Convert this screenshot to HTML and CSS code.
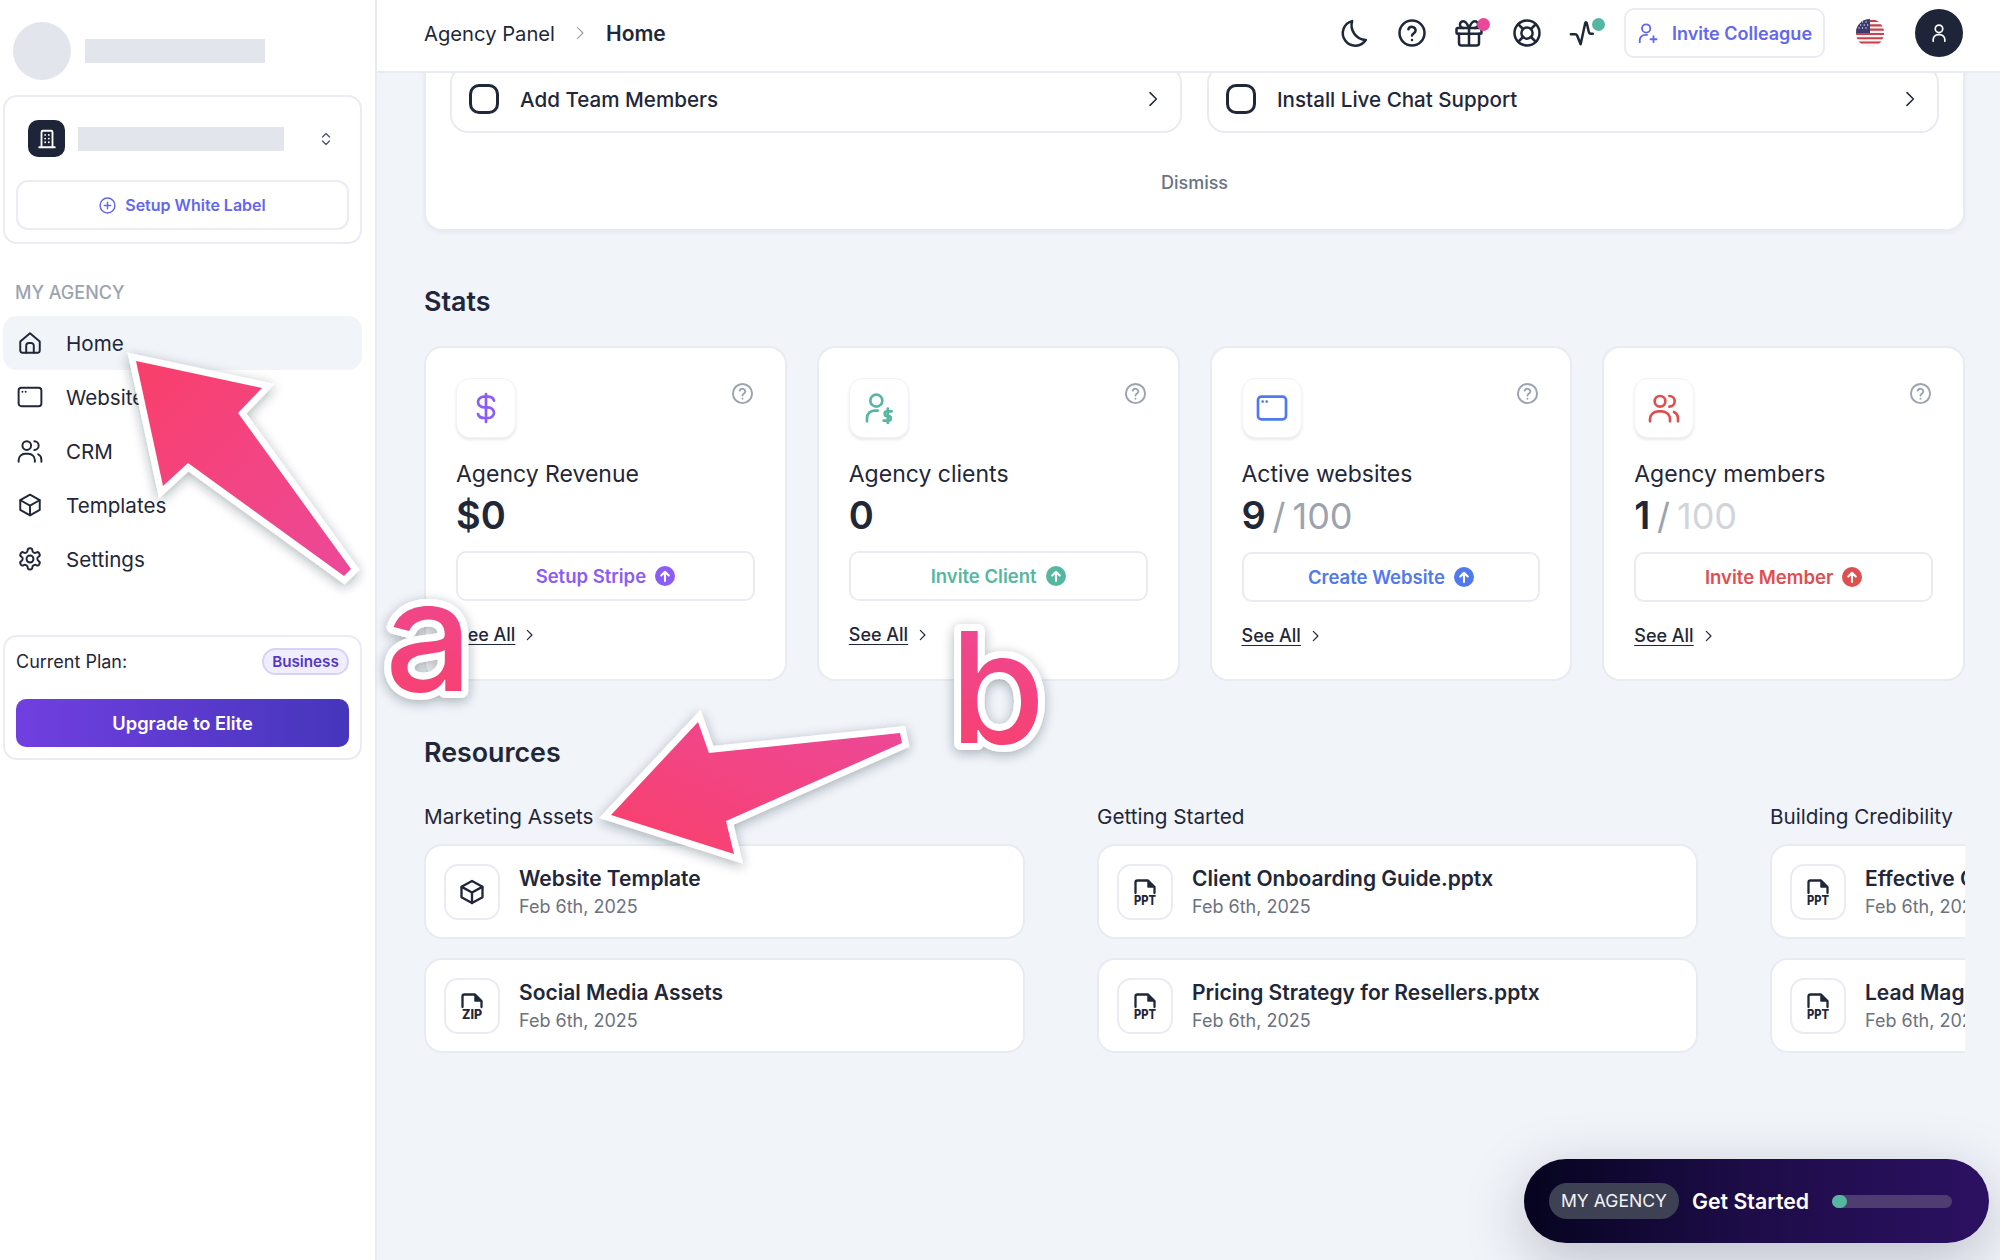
FILE: index.html
```html
<!DOCTYPE html>
<html lang="en">
<head>
<meta charset="utf-8">
<title>Agency Panel</title>
<link rel="stylesheet" href="styles.css">
</head>
<body>
<svg class="defs" width="0" height="0" aria-hidden="true">
  <defs>
    <symbol id="i-home" viewBox="0 0 24 24"><path d="M3 10.6 12 3l9 7.6V19a2 2 0 0 1-2 2H5a2 2 0 0 1-2-2z"/><path d="M8.5 21v-6.5a2.500 2.500 0 0 1 2.500-2.500h2a2.500 2.500 0 0 1 2.500 2.500V21"/></symbol>
    <symbol id="i-window" viewBox="0 0 24 24"><rect x="1.500" y="3.500" width="21" height="17" rx="2.500"/><path d="M5 7.200h.01M8 7.200h.01"/></symbol>
    <symbol id="i-users" viewBox="0 0 24 24"><circle cx="9" cy="7" r="4"/><path d="M1.500 22v-1.500a6 6 0 0 1 6-6h3a6 6 0 0 1 6 6V22"/><path d="M16 3a4 4 0 0 1 0 8"/><path d="M19.500 15a5.500 5.500 0 0 1 3 5v2"/></symbol>
    <symbol id="i-box" viewBox="0 0 24 24"><path d="M21 7.500 12 2.500l-9 5v9l9 5 9-5z"/><path d="M3.200 7.600 12 12.500l8.800-4.900M12 12.500v9"/></symbol>
    <symbol id="i-gear" viewBox="0 0 24 24"><path d="M12.200 2h-.4a2 2 0 0 0-2 2v.2a2 2 0 0 1-1 1.700l-.4.2a2 2 0 0 1-2 0l-.2-.1a2 2 0 0 0-2.700.7l-.2.4a2 2 0 0 0 .7 2.700l.2.100a2 2 0 0 1 1 1.700v.5a2 2 0 0 1-1 1.700l-.2.100a2 2 0 0 0-.7 2.700l.2.400a2 2 0 0 0 2.700.7l.2-.1a2 2 0 0 1 2 0l.4.2a2 2 0 0 1 1 1.700v.2a2 2 0 0 0 2 2h.4a2 2 0 0 0 2-2v-.2a2 2 0 0 1 1-1.700l.4-.2a2 2 0 0 1 2 0l.2.100a2 2 0 0 0 2.700-.7l.2-.4a2 2 0 0 0-.7-2.700l-.2-.1a2 2 0 0 1-1-1.700v-.5a2 2 0 0 1 1-1.700l.2-.1a2 2 0 0 0 .7-2.700l-.2-.4a2 2 0 0 0-2.700-.7l-.2.100a2 2 0 0 1-2 0l-.4-.2a2 2 0 0 1-1-1.700V4a2 2 0 0 0-2-2z"/><circle cx="12" cy="12" r="3.200"/></symbol>
    <symbol id="i-moon" viewBox="0 0 24 24"><path d="M10.500 2.500c-2 7 3 15 11 15A10 10 0 1 1 10.500 2.500z"/></symbol>
    <symbol id="i-help" viewBox="0 0 24 24"><circle cx="12" cy="12" r="10"/><path d="M9.100 9a3 3 0 0 1 5.800 1c0 2-2.900 2.500-2.900 4"/><path d="M12 17.500h.01"/></symbol>
    <symbol id="i-gift" viewBox="0 0 24 24"><rect x="2" y="8" width="20" height="4.500" rx="1"/><path d="M4 12.500V20a2 2 0 0 0 2 2h12a2 2 0 0 0 2-2v-7.500M12 8v14"/><path d="M12 8C10.500 4 9 2.500 7.500 2.500a2.700 2.700 0 0 0 0 5.500M12 8c1.500-4 3-5.500 4.500-5.500a2.700 2.700 0 0 1 0 5.500"/></symbol>
    <symbol id="i-buoy" viewBox="0 0 24 24"><circle cx="12" cy="12" r="10"/><circle cx="12" cy="12" r="4.500"/><path d="m5 5 3.800 3.800M19 5l-3.800 3.800M5 19l3.800-3.800M19 19l-3.800-3.800"/></symbol>
    <symbol id="i-pulse" viewBox="0 0 24 24"><path d="M1.500 13H5c.8 0 1.200.4 1.500 1l2.800 7L13 4c.2-.8.900-.8 1.200 0l1.600 7c.2.800.800 1.500 1.700 1.500h1.500"/></symbol>
    <symbol id="i-user" viewBox="0 0 24 24"><circle cx="12" cy="7" r="4.500"/><path d="M5 22v-2a6 6 0 0 1 6-6h2a6 6 0 0 1 6 6v2"/></symbol>
    <symbol id="i-invite" viewBox="0 0 24 24"><circle cx="10" cy="7" r="4.500"/><path d="M3 22v-2a6 6 0 0 1 6-6h2"/><path d="M18 15.500v6.500M14.800 18.800h6.500"/></symbol>
    <symbol id="i-dollar" viewBox="0 0 24 24"><path d="M12 1.500v21"/><path d="M18 6.500c-.5-1.700-2.200-3-4.500-3h-3C8 3.500 6 5.300 6 7.500s2 4 4.500 4h3c2.500 0 4.500 1.800 4.500 4s-2 4-4.500 4h-3c-2.300 0-4-1.300-4.500-3"/></symbol>
    <symbol id="i-client" viewBox="0 0 24 24"><circle cx="10" cy="6.500" r="4.500"/><path d="M3 22v-2.500a5.500 5.500 0 0 1 5.500-5.500h2.500"/><path d="M21.500 14.500h-3.500a1.700 1.700 0 0 0 0 3.500h1.500a1.800 1.800 0 0 1 0 3.500h-4M18.600 12.500v11"/></symbol>
    <symbol id="i-chev" viewBox="0 0 24 24"><path d="m8 3.500 8.500 8.500L8 20.500"/></symbol>
    <symbol id="i-updown" viewBox="0 0 24 24"><path d="m6 8.500 6-6 6 6M6 15.500l6 6 6-6"/></symbol>
    <symbol id="i-plus" viewBox="0 0 24 24"><circle cx="12" cy="12" r="10.500"/><path d="M12 7.500v9M7.500 12h9"/></symbol>
    <symbol id="i-file" viewBox="0 0 28 32"><path d="M4.500 17V6.500a2 2 0 0 1 2-2H17l6.500 6.500v6"/><path class="fold" d="M17 5v6h6z"/></symbol>
    <symbol id="i-building" viewBox="0 0 24 24"><path d="M6 21V4.500A1.500 1.500 0 0 1 7.500 3h9A1.500 1.500 0 0 1 18 4.500V21M3.500 21h17"/><path d="M10 7.500h.01M14 7.500h.01M10 11.500h.01M14 11.500h.01M10 15.500h.01M14 15.500h.01"/></symbol>
    <symbol id="i-up" viewBox="0 0 24 24"><circle class="up-disc" cx="12" cy="12" r="12"/><path class="up-arrow" d="M12 18V7M7.500 11.500 12 7l4.500 4.500"/></symbol>
    <clipPath id="flag-clip"><circle cx="14" cy="14" r="14"/></clipPath>
    <linearGradient id="pink-a" x1="0" y1="0" x2="1" y2="1"><stop offset="0" stop-color="#f9406a"/><stop offset="1" stop-color="#ec4899"/></linearGradient>
    <linearGradient id="pink-b" x1="0" y1="1" x2="1" y2="0"><stop offset="0" stop-color="#f9406a"/><stop offset="1" stop-color="#ec4899"/></linearGradient>
    <linearGradient id="pink-c" x1="0" y1="1" x2="0" y2="0"><stop offset="0" stop-color="#f9406a"/><stop offset="1" stop-color="#ec4899"/></linearGradient>
    <filter id="soft" x="-20%" y="-20%" width="140%" height="140%"><feDropShadow dx="0" dy="3" stdDeviation="6" flood-color="#1f2739" flood-opacity=".35"/></filter>
  </defs>
</svg>

<div class="app">
  <aside class="side">
    <div class="brand"><span class="brand-avatar"></span><span class="brand-name"></span></div>

    <section class="panel workspace">
      <div class="ws-row">
        <span class="ws-icon"><svg class="ico ico-22"><use href="#i-building"/></svg></span>
        <span class="ws-name"></span>
        <svg class="ico ws-sort"><use href="#i-updown"/></svg>
      </div>
      <button class="white-label"><svg class="ico ico-17"><use href="#i-plus"/></svg>Setup White Label</button>
    </section>

    <div class="side-label">MY AGENCY</div>
    <nav class="nav">
      <a class="nav-item active"><svg class="ico ico-26"><use href="#i-home"/></svg>Home</a>
      <a class="nav-item"><svg class="ico ico-26"><use href="#i-window"/></svg>Websites</a>
      <a class="nav-item"><svg class="ico ico-26"><use href="#i-users"/></svg>CRM</a>
      <a class="nav-item"><svg class="ico ico-26"><use href="#i-box"/></svg>Templates</a>
      <a class="nav-item"><svg class="ico ico-26"><use href="#i-gear"/></svg>Settings</a>
    </nav>

    <section class="panel plan">
      <div class="plan-row"><span>Current Plan:</span><span class="plan-badge">Business</span></div>
      <button class="upgrade">Upgrade to Elite</button>
    </section>
  </aside>

  <main class="main">
    <header class="top">
      <div class="crumbs">
        <span>Agency Panel</span>
        <svg class="ico crumb-chev"><use href="#i-chev"/></svg>
        <strong>Home</strong>
      </div>
      <div class="top-tools">
        <div class="tool-group">
          <span class="tool"><svg class="ico ico-30"><use href="#i-moon"/></svg></span>
          <span class="tool"><svg class="ico ico-30"><use href="#i-help"/></svg></span>
          <span class="tool"><svg class="ico ico-30"><use href="#i-gift"/></svg><i class="dot dot-pink"></i></span>
          <span class="tool"><svg class="ico ico-30"><use href="#i-buoy"/></svg></span>
          <span class="tool"><svg class="ico ico-30"><use href="#i-pulse"/></svg><i class="dot dot-teal"></i></span>
        </div>
        <button class="invite"><svg class="ico ico-22"><use href="#i-invite"/></svg>Invite Colleague</button>
        <svg class="flag" viewBox="0 0 28 28" aria-label="US flag">
          <g clip-path="url(#flag-clip)">
            <rect width="28" height="28" fill="#f3f4f6"/>
            <path class="flag-red" d="M0 1h28v2.100H0zM0 5.300h28v2.100H0zM0 9.600h28v2.100H0zM0 13.900h28v2.100H0zM0 18.200h28v2.100H0zM0 22.500h28v2.100H0z"/>
            <rect width="14" height="14" fill="#3c3b6e"/>
            <path class="flag-stars" d="M3 3h.01M6.500 3h.01M10 3h.01M4.700 6h.01M8.200 6h.01M11.700 6h.01M3 9h.01M6.500 9h.01M10 9h.01"/>
          </g>
        </svg>
        <span class="me"><svg class="ico ico-20"><use href="#i-user"/></svg></span>
      </div>
    </header>

    <div class="content">
      <section class="onboard">
        <div class="todo-grid">
          <a class="todo"><span class="check"></span><span class="todo-text">Add Team Members</span><svg class="ico todo-chev"><use href="#i-chev"/></svg></a>
          <a class="todo"><span class="check"></span><span class="todo-text">Install Live Chat Support</span><svg class="ico todo-chev"><use href="#i-chev"/></svg></a>
        </div>
        <div class="dismiss">Dismiss</div>
      </section>

      <h2 class="h-stats">Stats</h2>
      <div class="stats">
        <article class="stat c-purple">
          <div class="stat-top"><span class="stat-icon"><svg class="ico ico-32"><use href="#i-dollar"/></svg></span><svg class="ico stat-help"><use href="#i-help"/></svg></div>
          <div class="stat-title">Agency Revenue</div>
          <div class="stat-value">$0</div>
          <button class="stat-btn">Setup Stripe<svg class="ico ico-20 up"><use href="#i-up"/></svg></button>
          <a class="see">See All<svg class="ico see-chev"><use href="#i-chev"/></svg></a>
        </article>
        <article class="stat c-teal">
          <div class="stat-top"><span class="stat-icon"><svg class="ico ico-32"><use href="#i-client"/></svg></span><svg class="ico stat-help"><use href="#i-help"/></svg></div>
          <div class="stat-title">Agency clients</div>
          <div class="stat-value">0</div>
          <button class="stat-btn">Invite Client<svg class="ico ico-20 up"><use href="#i-up"/></svg></button>
          <a class="see">See All<svg class="ico see-chev"><use href="#i-chev"/></svg></a>
        </article>
        <article class="stat c-blue">
          <div class="stat-top"><span class="stat-icon"><svg class="ico ico-32"><use href="#i-window"/></svg></span><svg class="ico stat-help"><use href="#i-help"/></svg></div>
          <div class="stat-title">Active websites</div>
          <div class="stat-value">9 <span class="of">/ 100</span></div>
          <button class="stat-btn">Create Website<svg class="ico ico-20 up"><use href="#i-up"/></svg></button>
          <a class="see">See All<svg class="ico see-chev"><use href="#i-chev"/></svg></a>
        </article>
        <article class="stat c-red">
          <div class="stat-top"><span class="stat-icon"><svg class="ico ico-32"><use href="#i-users"/></svg></span><svg class="ico stat-help"><use href="#i-help"/></svg></div>
          <div class="stat-title">Agency members</div>
          <div class="stat-value">1 <span class="of">/ <span class="of-light">100</span></span></div>
          <button class="stat-btn">Invite Member<svg class="ico ico-20 up"><use href="#i-up"/></svg></button>
          <a class="see">See All<svg class="ico see-chev"><use href="#i-chev"/></svg></a>
        </article>
      </div>

      <h2 class="h-res">Resources</h2>
      <div class="res">
        <div class="res-col">
          <div class="res-label">Marketing Assets</div>
          <a class="item"><span class="item-icon"><svg class="ico ico-28"><use href="#i-box"/></svg></span><span class="item-text"><b>Website Template</b><small>Feb 6th, 2025</small></span></a>
          <a class="item"><span class="item-icon"><svg class="ftype" viewBox="0 0 28 32"><use href="#i-file" width="28" height="32"/><text x="14" y="29" textLength="20" lengthAdjust="spacingAndGlyphs">ZIP</text></svg></span><span class="item-text"><b>Social Media Assets</b><small>Feb 6th, 2025</small></span></a>
        </div>
        <div class="res-col">
          <div class="res-label">Getting Started</div>
          <a class="item"><span class="item-icon"><svg class="ftype" viewBox="0 0 28 32"><use href="#i-file" width="28" height="32"/><text x="14" y="29" textLength="22" lengthAdjust="spacingAndGlyphs">PPT</text></svg></span><span class="item-text"><b>Client Onboarding Guide.pptx</b><small>Feb 6th, 2025</small></span></a>
          <a class="item"><span class="item-icon"><svg class="ftype" viewBox="0 0 28 32"><use href="#i-file" width="28" height="32"/><text x="14" y="29" textLength="22" lengthAdjust="spacingAndGlyphs">PPT</text></svg></span><span class="item-text"><b>Pricing Strategy for Resellers.pptx</b><small>Feb 6th, 2025</small></span></a>
        </div>
        <div class="res-col">
          <div class="res-label">Building Credibility</div>
          <a class="item"><span class="item-icon"><svg class="ftype" viewBox="0 0 28 32"><use href="#i-file" width="28" height="32"/><text x="14" y="29" textLength="22" lengthAdjust="spacingAndGlyphs">PPT</text></svg></span><span class="item-text"><b>Effective Client Reports.pptx</b><small>Feb 6th, 2025</small></span></a>
          <a class="item"><span class="item-icon"><svg class="ftype" viewBox="0 0 28 32"><use href="#i-file" width="28" height="32"/><text x="14" y="29" textLength="22" lengthAdjust="spacingAndGlyphs">PPT</text></svg></span><span class="item-text"><b>Lead Magnet Templates.pptx</b><small>Feb 6th, 2025</small></span></a>
        </div>
      </div>
    </div>
  </main>
</div>

<aside class="fab">
  <span class="fab-chip">MY AGENCY</span>
  <strong class="fab-title">Get Started</strong>
  <span class="fab-track"><span class="fab-fill"></span></span>
</aside>

<svg class="notes" viewBox="0 0 2000 1260" aria-hidden="true">
  <polygon class="arrow arrow-a" points="136,361 262,388 238,413 351,569 344,576 188,463 163,486"/>
  <polygon class="arrow arrow-b" points="611,815 698,722 709,753 900,733 902,743 726,821 734,854"/>
  <text class="letter letter-a" x="385" y="691">a</text>
  <text class="letter letter-b" x="950" y="743">b</text>
</svg>
</body>
</html>
```
FILE: styles.css
```css
* { box-sizing: border-box; }
html, body { margin: 0; height: 1260px; overflow: hidden; }
body {
  font-family: Inter, "Liberation Sans", sans-serif;
  color: #1f2739;
  background: #f1f4f9;
  position: relative;
}
button { font: inherit; background: #fff; cursor: pointer; }
.defs { position: absolute; }

.ico {
  display: block;
  flex: none;
  fill: none;
  stroke: currentColor;
  stroke-width: 2;
  stroke-linecap: round;
  stroke-linejoin: round;
}
.ico-17 { width: 17px; height: 17px; }
.ico-20 { width: 20px; height: 20px; }
.ico-22 { width: 22px; height: 22px; }
.ico-26 { width: 26px; height: 26px; stroke-width: 1.800; }
.ico-28 { width: 28px; height: 28px; }
.ico-30 { width: 30px; height: 30px; }
.ico-32 { width: 32px; height: 32px; }

.app { display: flex; height: 1260px; }

/* sidebar */
.side {
  width: 377px;
  flex: none;
  background: #fff;
  border-right: 2px solid #e8ecf2;
}
.brand { display: flex; align-items: center; gap: 14px; padding: 22px 0 0 13px; }
.brand-avatar { width: 58px; height: 58px; border-radius: 50%; background: #e2e6ec; }
.brand-name { width: 180px; height: 24px; background: #e2e6ec; }

.panel {
  width: 359px;
  margin-left: 3px;
  border: 2px solid #e9ecf2;
  border-radius: 14px;
  background: #fff;
  padding: 11px;
}
.workspace { margin-top: 15px; padding-top: 23px; padding-bottom: 12px; }
.ws-row { display: flex; align-items: center; padding-left: 12px; height: 37px; }
.ws-icon {
  width: 37px; height: 37px;
  border-radius: 10px;
  background: #1e2538;
  color: #fff;
  display: flex; align-items: center; justify-content: center;
}
.ws-name { width: 206px; height: 24px; margin-left: 13px; background: #e2e6ec; }
.ws-sort { width: 14px; height: 16px; margin-left: 35px; color: #4b5563; stroke-width: 2.200; }
.white-label {
  width: 100%;
  height: 50px;
  margin-top: 23px;
  border: 2px solid #e9ecf2;
  border-radius: 12px;
  color: #6366f1;
  font-size: 16px;
  font-weight: 600;
  display: flex; align-items: center; justify-content: center; gap: 9px;
}
.side-label {
  margin: 38px 0 12px 15px;
  font-size: 18px;
  line-height: 22px;
  font-weight: 500;
  color: #9ca3af;
}
.nav-item {
  display: flex; align-items: center; gap: 23px;
  width: 359px; height: 54px;
  margin-left: 3px;
  padding-left: 14px;
  border-radius: 14px;
  font-size: 20.6px;
  color: #1f2739;
}
.nav-item.active { background: #f1f4f9; }
.plan { margin-top: 49px; }
.plan-row { display: flex; align-items: center; justify-content: space-between; height: 27px; font-size: 18px; }
.plan-badge {
  width: 87px;
  height: 27px;
  border: 2px solid #d8d2f6;
  border-radius: 14px;
  background: #f0edfd;
  color: #5438c8;
  font-size: 15.2px;
  font-weight: 600;
  line-height: 23px;
  text-align: center;
}
.upgrade {
  width: 100%;
  height: 48px;
  margin-top: 24px;
  border: 0;
  border-radius: 10px;
  background: linear-gradient(90deg, #713fe0, #4636bc);
  color: #fff;
  font-size: 18.3px;
  font-weight: 600;
}

/* main */
.main { flex: 1; min-width: 0; display: flex; flex-direction: column; height: 1260px; }
.top {
  height: 73px;
  flex: none;
  display: flex; align-items: center;
  padding: 0 37px 5px 47px;
  background: #fff;
  border-bottom: 2px solid #e8ecf2;
  position: relative;
  z-index: 2;
}
.crumbs { display: flex; align-items: center; font-size: 20.2px; }
.crumbs strong { font-size: 21px; font-weight: 600; }
.crumb-chev { width: 16px; height: 16px; margin: 0 18px 0 17px; color: #9ca3af; stroke-width: 1.800; }
.top-tools { margin-left: auto; display: flex; align-items: center; }
.tool-group { display: flex; gap: 27.5px; }
.tool { position: relative; display: block; width: 30px; height: 30px; }
.dot { position: absolute; width: 13px; height: 13px; border-radius: 50%; top: 0; }
.dot-pink { background: #ec4899; left: 23px; }
.dot-teal { background: #56b7a0; left: 23px; }
.invite {
  width: 201px; height: 50px;
  margin-left: 25px;
  border: 2px solid #e9ecf2;
  border-radius: 10px;
  color: #6366f1;
  font-size: 18px;
  font-weight: 600;
  display: flex; align-items: center; justify-content: center; gap: 13px;
}
.flag { width: 28px; height: 28px; display: block; margin-left: 31px; }
.flag-red { fill: #c8414b; }
.flag-stars { fill: none; stroke: #f3f4f6; stroke-width: 1.300; stroke-linecap: round; }
.me {
  width: 48px; height: 48px;
  margin-left: 31px;
  border-radius: 50%;
  background: #1e2538;
  color: #fff;
  display: flex; align-items: center; justify-content: center;
}

.content { flex: 1; min-height: 0; padding: 0 35px 0 47px; }

.onboard {
  margin-top: -35px;
  padding: 25px 24px 35px;
  background: #fff;
  border: 2px solid #e8ecf2;
  border-radius: 18px;
  box-shadow: 0 2px 4px rgba(30, 40, 60, .05);
}
.todo-grid { display: grid; grid-template-columns: 1fr 1fr; gap: 25px; }
.todo {
  height: 68px;
  display: flex; align-items: center;
  padding: 0 18px 0 17px;
  border: 2px solid #e8ecf2;
  border-radius: 18px;
}
.check {
  width: 30px; height: 30px;
  border: 3px solid #1f2739;
  border-radius: 10px;
}
.todo-text { margin-left: 21px; font-size: 20.6px; font-weight: 500; }
.todo-chev { width: 18px; height: 20px; margin-left: auto; }
.dismiss {
  margin-top: 39px;
  text-align: center;
  font-size: 18px;
  line-height: 22px;
  font-weight: 500;
  color: #6b7280;
}

h2 { margin: 0; font-size: 26.8px; line-height: 34px; font-weight: 600; }
.h-stats { margin-top: 53px; }
.stats { margin-top: 28px; display: grid; grid-template-columns: repeat(4, 1fr); gap: 30px; }
.stat {
  height: 335px;
  padding: 30px;
  background: #fff;
  border: 2px solid #e8ecf2;
  border-radius: 18px;
  display: flex; flex-direction: column;
}
.stat-top { display: flex; align-items: flex-start; justify-content: space-between; }
.stat-icon {
  width: 60px; height: 60px;
  border-radius: 14px;
  background: #fff;
  border: 1px solid #f1f3f7;
  box-shadow: 0 2px 3px rgba(30, 40, 60, .1);
  display: flex; align-items: center; justify-content: center;
}
.stat-help { width: 23px; height: 23px; margin: 4px 1px 0 0; color: #9ca3af; stroke-width: 2; }
.stat-title { margin-top: 21px; font-size: 23px; line-height: 30px; }
.stat-value { margin-top: 4px; font-size: 38px; line-height: 44px; font-weight: 600; white-space: nowrap; word-spacing: -3px; }
.of { color: #9ca3af; font-weight: 400; font-size: 36px; }
.of-light { color: #d1d5db; }
.stat-btn {
  flex: none;
  margin-top: 14px;
  height: 50px;
  border: 2px solid #e8ecf2;
  border-radius: 10px;
  font-size: 18.5px;
  font-weight: 600;
  color: inherit;
  display: flex; align-items: center; justify-content: center; gap: 9px;
}
.c-purple { --tone: #8b5cf6; }
.c-teal { --tone: #56b7a0; }
.c-blue { --tone: #5079ee; }
.c-red { --tone: #e04f4f; }
.stat-icon, .stat-btn { color: var(--tone); }
.up { stroke: none; }
.up-disc { fill: currentColor; stroke: none; }
.up-arrow { fill: none; stroke: #fff; stroke-width: 2.500; }
.see {
  margin-top: 22px;
  align-self: flex-start;
  display: flex; align-items: center; gap: 8px;
  font-size: 18px;
  line-height: 24px;
  font-weight: 500;
  color: #1f2739;
  text-decoration: underline;
  text-underline-offset: 3px;
}
.see-chev { width: 13px; height: 14px; stroke-width: 2.200; }

.h-res { margin-top: 54px; }
.res { display: flex; gap: 72px; overflow: hidden; margin-top: 35px; }
.res-col { flex: 0 0 601px; display: flex; flex-direction: column; gap: 19px; }
.res-label { font-size: 20.7px; line-height: 26px; margin-bottom: -5px; white-space: nowrap; }
.item {
  height: 95px;
  display: flex; align-items: center; gap: 19px;
  padding: 0 18px;
  background: #fff;
  border: 2px solid #e8ecf2;
  border-radius: 18px;
  white-space: nowrap;
  overflow: hidden;
}
.item-icon {
  width: 56px; height: 56px;
  flex: none;
  border: 2px solid #e9ecf2;
  border-radius: 14px;
  display: flex; align-items: center; justify-content: center;
}
.ftype { width: 28px; height: 32px; display: block; color: #1f2739; }
.ftype use { fill: none; stroke: currentColor; stroke-width: 2.300; stroke-linejoin: round; stroke-linecap: round; }
.fold { fill: currentColor; stroke-width: 1.500; }
.ftype text { font-size: 13px; font-weight: 800; text-anchor: middle; fill: currentColor; stroke: none; }
.item-text { display: flex; flex-direction: column; padding-top: 2px; }
.item-text b { font-size: 21px; line-height: 28px; font-weight: 600; }
.item-text small { font-size: 18px; line-height: 27px; color: #6b7280; }

/* floating launcher */
.fab {
  position: absolute;
  left: 1524px; top: 1159px;
  width: 465px; height: 84px;
  display: flex; align-items: center;
  padding-left: 25px;
  border-radius: 42px;
  background: linear-gradient(90deg, #06041f 0%, #1c0c46 45%, #2c1162 100%);
  box-shadow: 0 16px 60px rgba(30, 30, 60, .25);
  color: #fff;
}
.fab-chip {
  width: 130px; height: 36px;
  border-radius: 18px;
  background: #3d4153;
  font-size: 17.6px;
  line-height: 36px;
  text-align: center;
  color: #f3f4f6;
}
.fab-title { margin-left: 13px; font-size: 21.3px; font-weight: 600; }
.fab-track {
  width: 120px; height: 13px;
  margin-left: 23px;
  border-radius: 7px;
  background: #4f3c70;
}
.fab-fill { display: block; width: 15px; height: 13px; border-radius: 7px; background: #56b7a0; }

/* annotation layer */
.notes {
  position: absolute;
  left: 0; top: 0;
  width: 2000px; height: 1260px;
  pointer-events: none;
}
.arrow { stroke: #fff; stroke-width: 13; stroke-linejoin: miter; stroke-miterlimit: 10; paint-order: stroke; filter: url(#soft); }
.arrow-a { fill: url(#pink-a); }
.arrow-b { fill: url(#pink-b); }
.letter {
  font-size: 154px;
  font-weight: 500;
  stroke: #fff;
  stroke-width: 14px;
  stroke-linejoin: round;
  paint-order: stroke;
  fill: url(#pink-c);
  filter: url(#soft);
}
```
